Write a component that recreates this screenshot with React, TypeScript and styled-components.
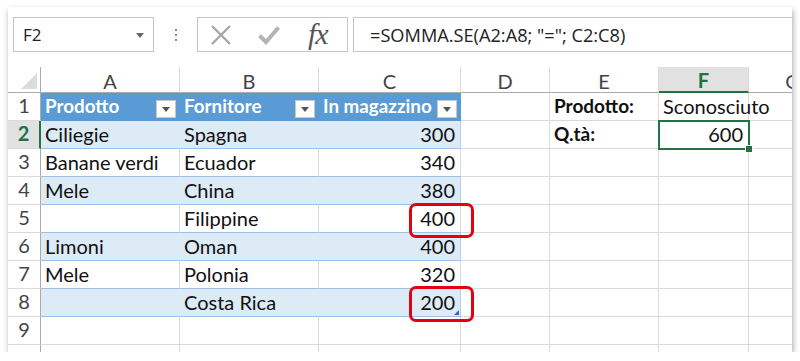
import React from "react";
import styled, { createGlobalStyle, css } from "styled-components";

const GlobalStyle = createGlobalStyle`
  html, body {
    margin: 0;
    padding: 0;
    background: #ffffff;
  }
  body {
    font-family: Lato, "Liberation Sans", sans-serif;
  }
`;

const GREEN = "#217346";
const GRID = "#dadada";
const HEADER_LINE = "#ababab";
const TABLE_BLUE = "#5b9bd5";
const BAND = "#ddebf7";
const BAND_LINE = "#9bc2e6";

const COLS = [33, 139, 139, 142, 89, 109, 90, 88];
const LETTERS = ["A", "B", "C", "D", "E", "F", "G"];

type Align = "left" | "right";

interface CellData {
  text?: string;
  align?: Align;
  bold?: boolean;
}

// table rows A..C, plus extras in E/F
const tableRows: [string, string, string][] = [
  ["Ciliegie", "Spagna", "300"],
  ["Banane verdi", "Ecuador", "340"],
  ["Mele", "China", "380"],
  ["", "Filippine", "400"],
  ["Limoni", "Oman", "400"],
  ["Mele", "Polonia", "320"],
  ["", "Costa Rica", "200"],
];

const Page = styled.div`
  padding: 7px 0 0 8px;
`;

const Frame = styled.div`
  position: relative;
  width: 784px;
  height: 345px;
  background: #ffffff;
  overflow: hidden;
  box-shadow: 1px 3px 6px rgba(0, 0, 0, 0.35);
`;

const FormulaBar = styled.div`
  display: flex;
  align-items: flex-start;
  height: 60px;
  padding: 10px 0 0 5px;
  box-sizing: border-box;
`;

const NameBox = styled.div`
  position: relative;
  width: 141px;
  height: 35px;
  box-sizing: border-box;
  border: 1px solid #c6c6c6;
  padding-left: 9px;
  display: flex;
  align-items: center;
  font-family: "Open Sans", "Noto Sans", sans-serif;
  font-size: 17px;
  color: #222;

  &::after {
    content: "";
    position: absolute;
    right: 9px;
    top: 15px;
    border-left: 4px solid transparent;
    border-right: 4px solid transparent;
    border-top: 5px solid #666;
  }
`;

const Dots = styled.div`
  width: 43px;
  height: 35px;
  display: flex;
  flex-direction: column;
  align-items: center;
  justify-content: center;
  gap: 3px;

  span {
    width: 2px;
    height: 2px;
    background: #8a8a8a;
  }
`;

const ButtonGroup = styled.div`
  width: 151px;
  height: 35px;
  box-sizing: border-box;
  border: 1px solid #c6c6c6;
  display: flex;
  align-items: center;
  padding-left: 12px;
  gap: 26px;
`;

const FxLabel = styled.span`
  font-family: "Liberation Serif", "DejaVu Serif", serif;
  font-style: italic;
  font-size: 30px;
  color: #555;
  margin-left: 2px;
  line-height: 1;
  letter-spacing: -1px;
  transform: translateY(-1px);
`;

const FormulaInput = styled.div`
  flex: 1;
  margin-left: 5px;
  margin-right: -3px;
  height: 35px;
  box-sizing: border-box;
  border: 1px solid #c6c6c6;
  padding-left: 16px;
  display: flex;
  align-items: center;
  font-family: "Open Sans", "Noto Sans", sans-serif;
  font-size: 18.2px;
  color: #222;
  white-space: pre;
`;

const Sheet = styled.div`
  position: relative;
  display: grid;
  grid-template-columns: ${COLS.map((c) => c + "px").join(" ")};
  grid-template-rows: 26px;
  grid-auto-rows: 28px;
`;

const ColHeader = styled.div<{ $selected?: boolean }>`
  display: flex;
  align-items: center;
  justify-content: center;
  box-sizing: border-box;
  border-right: 1px solid ${GRID};
  border-bottom: 1px solid ${HEADER_LINE};
  font-size: 20px;
  color: #444;
  padding-top: 2px;

  ${(p) =>
    p.$selected &&
    css`
      background: #e1e1e1;
      color: ${GREEN};
      font-weight: 700;
      border-bottom: 2px solid ${GREEN};
    `}
`;

const Corner = styled.div`
  position: relative;
  box-sizing: border-box;
  border-right: 1px solid ${HEADER_LINE};
  border-bottom: 1px solid ${HEADER_LINE};

  &::after {
    content: "";
    position: absolute;
    right: 3px;
    bottom: 3px;
    border-left: 16px solid transparent;
    border-bottom: 16px solid #dcdcdc;
  }
`;

const RowHeader = styled.div<{ $selected?: boolean }>`
  display: flex;
  align-items: flex-end;
  justify-content: center;
  box-sizing: border-box;
  padding-bottom: 3px;
  border-right: 1px solid ${HEADER_LINE};
  border-bottom: 1px solid ${GRID};
  font-size: 20px;
  color: #444;

  ${(p) =>
    p.$selected &&
    css`
      background: #e1e1e1;
      color: ${GREEN};
      font-weight: 700;
      border-right: 2px solid ${GREEN};
    `}
`;

type Kind = "plain" | "head" | "band" | "row";

const Cell = styled.div<{ $kind: Kind; $align?: Align; $bold?: boolean; $edge?: boolean }>`
  position: relative;
  display: flex;
  align-items: flex-end;
  justify-content: ${(p) => (p.$align === "right" ? "flex-end" : "flex-start")};
  box-sizing: border-box;
  padding: 0 5px 3px 4px;
  border-right: 1px solid ${GRID};
  border-bottom: 1px solid ${GRID};
  font-size: ${(p) => (p.$bold ? "19px" : "20px")};
  line-height: 1.1;
  color: #111;
  font-weight: ${(p) => (p.$bold ? 700 : 400)};
  white-space: nowrap;

  ${(p) =>
    p.$kind === "head" &&
    css`
      background: ${TABLE_BLUE};
      color: #ffffff;
      font-weight: 700;
      font-size: 18.8px;
      border-right-color: ${TABLE_BLUE};
      border-bottom-color: ${TABLE_BLUE};
    `}
  ${(p) =>
    p.$kind === "band" &&
    css`
      background: ${BAND};
      border-right-color: ${p.$edge ? "#b4cde6" : BAND};
      border-bottom-color: ${BAND_LINE};
    `}
  ${(p) =>
    p.$kind === "row" &&
    css`
      border-bottom-color: ${BAND_LINE};
    `}
`;

const FilterButton = styled.span`
  position: absolute;
  right: 3px;
  bottom: 2px;
  width: 20px;
  height: 18px;
  box-sizing: border-box;
  background: #ffffff;
  border: 1px solid #c8c8c8;

  &::after {
    content: "";
    position: absolute;
    left: 5px;
    top: 6px;
    border-left: 4px solid transparent;
    border-right: 4px solid transparent;
    border-top: 5px solid #555;
  }
`;

const ResizeHandle = styled.span`
  position: absolute;
  right: 1px;
  bottom: 1px;
  border-left: 5px solid transparent;
  border-bottom: 5px solid #3f5fb0;
`;

const Selection = styled.div`
  position: absolute;
  left: 650px;
  top: 53px;
  width: 92px;
  height: 30px;
  box-sizing: border-box;
  border: 2px solid ${GREEN};
  pointer-events: none;

  &::after {
    content: "";
    position: absolute;
    right: -5px;
    bottom: -5px;
    width: 6px;
    height: 6px;
    background: ${GREEN};
    border: 1px solid #ffffff;
  }
`;

const Highlight = styled.div<{ $top: number; $height: number }>`
  position: absolute;
  left: 401px;
  top: ${(p) => p.$top}px;
  width: 65px;
  height: ${(p) => p.$height}px;
  box-sizing: border-box;
  border: 3px solid #e3000f;
  border-radius: 7px;
  pointer-events: none;
`;

function CancelIcon() {
  return (
    <svg width="22" height="20" viewBox="0 0 22 20">
      <path d="M2 1 L20 19 M20 1 L2 19" stroke="#a6a6a6" strokeWidth="2.4" fill="none" />
    </svg>
  );
}

function CheckIcon() {
  return (
    <svg width="22" height="20" viewBox="0 0 22 20">
      <path d="M1.5 10.5 L8 17 L20.5 2.5" stroke="#b4b4b4" strokeWidth="4" fill="none" />
    </svg>
  );
}

function buildRow(r: number): CellData[] {
  // r: 1-based sheet row
  const cells: CellData[] = [];
  if (r === 1) {
    cells.push({ text: "Prodotto" }, { text: "Fornitore" }, { text: "In magazzino" });
  } else if (r >= 2 && r <= 8) {
    const [a, b, c] = tableRows[r - 2];
    cells.push({ text: a }, { text: b }, { text: c, align: "right" });
  } else {
    cells.push({}, {}, {});
  }
  cells.push({}); // D
  if (r === 1) {
    cells.push({ text: "Prodotto:", bold: true }, { text: "Sconosciuto" });
  } else if (r === 2) {
    cells.push({ text: "Q.tà:", bold: true }, { text: "600", align: "right" });
  } else {
    cells.push({}, {});
  }
  cells.push({}); // G
  return cells;
}

function kindFor(r: number, c: number): Kind {
  if (c > 2 || r > 8) return "plain";
  if (r === 1) return "head";
  return r % 2 === 0 ? "band" : "row";
}

export default function App() {
  const rows = Array.from({ length: 10 }, (_, i) => i + 1);

  return (
    <Page>
      <GlobalStyle />
      <Frame>
        <FormulaBar>
          <NameBox>F2</NameBox>
          <Dots>
            <span />
            <span />
            <span />
          </Dots>
          <ButtonGroup>
            <CancelIcon />
            <CheckIcon />
            <FxLabel>fx</FxLabel>
          </ButtonGroup>
          <FormulaInput>=SOMMA.SE(A2:A8; "="; C2:C8)</FormulaInput>
        </FormulaBar>

        <Sheet>
          <Corner />
          {LETTERS.map((l) => (
            <ColHeader key={l} $selected={l === "F"}>
              {l}
            </ColHeader>
          ))}

          {rows.map((r) => (
            <React.Fragment key={r}>
              {/* row 10 is only a sliver at the bottom edge, no number shows */}
              <RowHeader $selected={r === 2}>{r < 10 ? r : ""}</RowHeader>
              {buildRow(r).map((cell, c) => (
                <Cell
                  key={c}
                  $kind={kindFor(r, c)}
                  $align={cell.align}
                  $bold={cell.bold}
                  $edge={c === 2}
                >
                  {cell.text}
                  {r === 1 && c <= 2 && <FilterButton />}
                  {r === 8 && c === 2 && <ResizeHandle />}
                </Cell>
              ))}
            </React.Fragment>
          ))}

          <Selection />
          <Highlight $top={136} $height={35} />
          <Highlight $top={219} $height={36} />
        </Sheet>
      </Frame>
    </Page>
  );
}
